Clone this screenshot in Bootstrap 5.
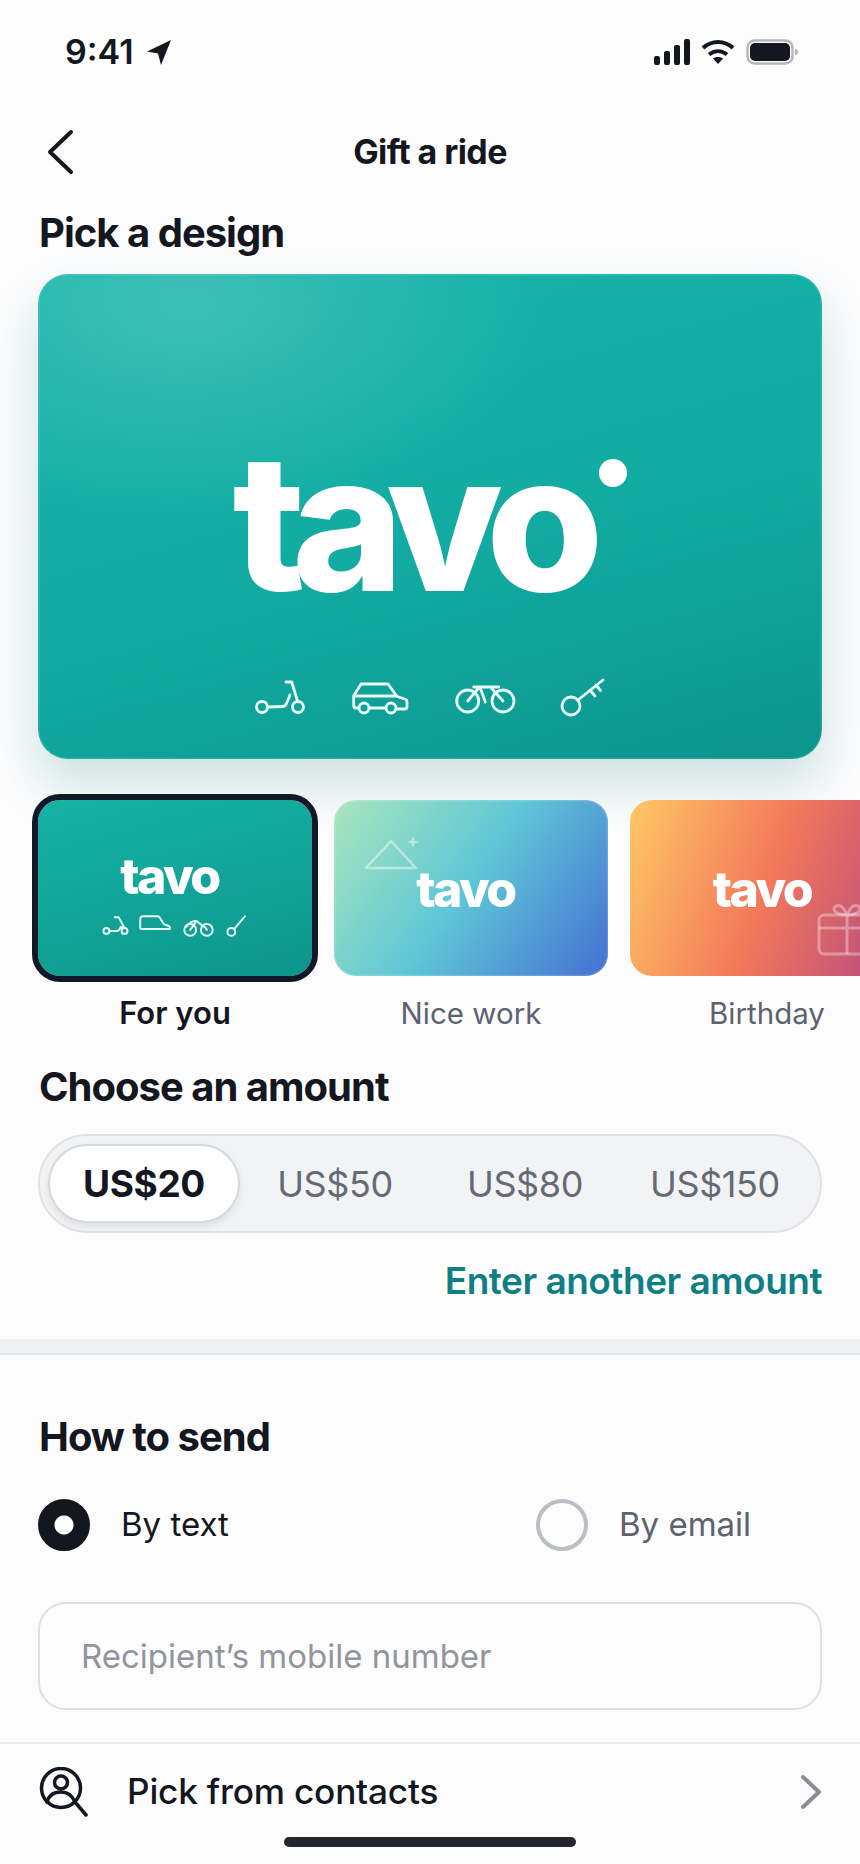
<!DOCTYPE html>
<html lang="en">
<head>
  <meta charset="UTF-8">
  <title>Gift a ride</title>
  <link href="https://cdn.jsdelivr.net/npm/bootstrap@5.3.0/dist/css/bootstrap.min.css" rel="stylesheet">
  <style>
    html, body { height: 1864px; overflow: hidden; }
    body {
      background: #fcfcfd;
      color: #14171f;
      font-family: Inter, "Liberation Sans", sans-serif;
    }
    .status-row { height: 104px; padding: 30px 62px 0 65px; }
    .status-group { height: 44px; }
    .status-time { font-size: 34px; font-weight: 600; line-height: 44px; }
    .top-nav { height: 96px; padding: 0 38px; position: relative; }
    .top-title { font-size: 34px; font-weight: 700; letter-spacing: -.6px; line-height: 1; }
    .back-link { position: absolute; left: 47px; top: 25px; line-height: 0; }
    .sect-title { font-size: 40px; font-weight: 700; letter-spacing: -1px; line-height: 46px; margin: 0; }
    .pad-x { padding-left: 39px; padding-right: 38px; }
    .pick-title { margin-top: 10px; }
    .hero-card {
      width: 784px; height: 485px; margin: 18px 0 0 38px;
      border-radius: 30px;
      background:
        radial-gradient(ellipse 360px 220px at 150px 30px, rgba(255,255,255,.17), rgba(255,255,255,0)),
        linear-gradient(165deg, #17b4a9 0%, #12aba1 55%, #0b958d 100%);
      box-shadow: 0 26px 50px rgba(15,120,110,.2), inset 0 0 0 1.500px rgba(255,255,255,.1);
    }
    .logo-word { color: #fff; font-weight: 800; position: relative; display: inline-block; line-height: 1; }
    .logo-big { font-size: 190px; letter-spacing: -14px; margin: 153px 38px 0 0; height: 190px; }
    .logo-dot {
      position: absolute; width: 28px; height: 28px; border-radius: 50%;
      background: #fff; left: 367px; top: 32px;
    }
    .hero-icons { margin-top: 61px; }
    .thumb-scroll { overflow: hidden; margin-top: 33px; padding: 8px 0 0 38px; }
    .thumb-strip { gap: 22px; width: max-content; }
    .thumb-item { width: 274px; flex: none; text-align: center; }
    .thumb-card { height: 176px; border-radius: 22px; position: relative; overflow: hidden; }
    .thumb-on { background: linear-gradient(165deg, #16b3a6, #0d968b); outline: 6px solid #111827; }
    .thumb-nice { background: linear-gradient(125deg, #a9e6bd 0%, #5fc7d6 48%, #4470d3 100%); box-shadow: inset 0 0 0 1.500px rgba(255,255,255,.15); }
    .thumb-bday { background: linear-gradient(110deg, #ffc865 0%, #f2785a 50%, #bd4f7d 92%); }
    .logo-small { font-size: 50px; letter-spacing: -2.600px; }
    .thumb-label { font-size: 29.500px; line-height: 36px; margin-top: 19px; color: #5c6270; }
    .thumb-label.is-on { color: #14171f; font-weight: 600; font-size: 31px; }
    .deco { position: absolute; }
    .amount-title { margin-top: 33px; }
    .seg-wrap {
      width: 784px; height: 99px; margin: 24px 0 0 38px; padding: 9px 10px 9px 8px;
      border-radius: 50px; background: #f2f3f5; border: 2px solid #e1e2e5;
    }
    .seg-btn {
      width: 190px; height: 79px; border: 0; border-radius: 40px; padding: 0;
      font-size: 36px; color: #666a76; letter-spacing: -.4px; flex: none;
    }
    .seg-btn.is-on {
      width: 192px; font-size: 37px;
      background: #fff; color: #14171f; font-weight: 700; border: 2px solid #d8d9dc;
      box-shadow: 0 4px 8px rgba(0,0,0,.08);
    }
    .seg-btn.is-on:hover, .seg-btn.is-on:active { background: #fff; color: #14171f; }
    .other-amt {
      display: block; text-align: right; font-size: 37px; font-weight: 600; letter-spacing: -.5px;
      color: #0e7f83; text-decoration: none; line-height: 44px; margin: 26px 38px 0 0;
    }
    .band { height: 16px; background: #f0f1f2; border-bottom: 2px solid #e6e7e9; margin-top: 36px; }
    .send-title { margin-top: 59px; }
    .radio-row { margin: 39px 0 0 38px; height: 52px; }
    .radio-opt { gap: 31px; margin: 0; padding: 0; font-size: 33px; flex: none; }
    .radio-opt:first-child { width: 498px; }
    .radio-opt + .radio-opt { color: #5c6270; width: 300px; }
    .radio-opt .form-check-input {
      width: 52px; height: 52px; margin: 0; float: none; flex: none; background-color: transparent;
      border: 4px solid #bcbec5;
    }
    .radio-opt .form-check-input:checked {
      background-color: #14171f; border-color: #14171f;
      background-image: radial-gradient(circle, #fff 0 9px, transparent 10px);
    }
    .phone-input.form-control {
      width: 784px; height: 108px; margin: 51px 0 0 38px; padding: 0 41px;
      border: 2px solid #dfe0e3; border-radius: 28px; background: #fcfcfd; font-size: 33px;
    }
    .phone-input::placeholder { color: #92959e; opacity: 1; }
    .contact-row {
      margin-top: 32px; height: 95px; padding: 2px 38px 0 39px;
      border-top: 2px solid #e9eaec; color: #14171f; text-decoration: none; font-size: 35.200px; font-weight: 500;
      letter-spacing: -.2px;
    }
    .home-bar { width: 292px; height: 10px; margin: 0 auto; border-radius: 5px; background: #25262e; }
  </style>
</head>
<body>

  <div class="status-row d-flex justify-content-between align-items-start">
    <div class="status-group d-flex align-items-center" style="gap:12px">
      <span class="status-time">9:41</span>
      <svg width="26" height="27" viewBox="0 0 26 27"><path d="M25 1 1 12.500 12 14.500 15 26Z" fill="#14171f"/></svg>
    </div>
    <div class="status-group d-flex align-items-center" style="gap:11px">
      <svg width="36" height="26" viewBox="0 0 36 26" fill="#14171f"><rect x="0" y="17" width="6" height="9" rx="2"/><rect x="10" y="12" width="6" height="14" rx="2"/><rect x="20" y="6" width="6" height="20" rx="2"/><rect x="30" y="0" width="6" height="26" rx="2"/></svg>
      <svg width="34" height="26" viewBox="0 0 34 26" fill="none" stroke="#14171f" stroke-width="4"><path d="M2 9C11 1 23 1 32 9"/><path d="M8 15.500c5.500-4.500 12.500-4.500 18 0"/><path d="M17 25l-5-5.500c3-2 7-2 10 0z" fill="#14171f" stroke="none"/></svg>
      <svg width="52" height="26" viewBox="0 0 52 26"><rect x="1.500" y="1.500" width="45" height="23" rx="7" fill="none" stroke="#b5b6ba" stroke-width="2.500"/><rect x="4" y="4" width="40" height="18" rx="5" fill="#14171f"/><path d="M49 9.500c2 .5 3 2 3 3.500s-1 3-3 3.500z" fill="#b5b6ba"/></svg>
    </div>
  </div>

  <div class="top-nav d-flex align-items-center justify-content-center">
    <a href="#" class="back-link" aria-label="Back">
      <svg width="28" height="46" viewBox="0 0 28 46" fill="none" stroke="#14171f" stroke-width="4" stroke-linecap="round" stroke-linejoin="round"><path d="M24 3 3 23l21 20"/></svg>
    </a>
    <span class="top-title">Gift a ride</span>
  </div>

  <div class="pad-x pick-title"><h2 class="sect-title">Pick a design</h2></div>

  <div class="hero-card text-center">
    <div class="logo-word logo-big">tavo<span class="logo-dot"></span></div>
    <div class="hero-icons d-flex justify-content-center align-items-center">
      <svg width="50" height="36" viewBox="0 0 50 36" fill="none" stroke="#e8fbf8" stroke-width="2.800" stroke-linecap="round" stroke-linejoin="round" style="margin-right:47px"><circle cx="7" cy="27" r="5.500"/><circle cx="43" cy="27" r="5.500"/><path d="M12.500 27 27.500 26.500c2 0 3-1 4-3L35 15M31 2h5.700l6 19.700"/></svg>
      <svg width="58" height="34" viewBox="0 0 58 34" fill="none" stroke="#e8fbf8" stroke-width="2.800" stroke-linecap="round" stroke-linejoin="round" style="margin-right:44px"><path d="M7 27H4c-1.500 0-2.300-1-2.300-2.500V15L9 3h27l9 12.500 8 2.500c1.500.5 2 1.500 2 3v4.500c0 1.500-1 2.500-2.500 2.500H44M34 27H17M1.700 15h43"/><circle cx="12" cy="27" r="5"/><circle cx="39" cy="27" r="5"/></svg>
      <svg width="62" height="34" viewBox="0 0 62 34" fill="none" stroke="#e8fbf8" stroke-width="2.800" stroke-linecap="round" stroke-linejoin="round" style="margin-right:43px"><circle cx="13.700" cy="20" r="11"/><circle cx="49" cy="20" r="11"/><path d="M19.700 6h25M13.700 20 24.700 7M26.300 7l5 14M37.300 7 49 20"/></svg>
      <svg width="46" height="40" viewBox="0 0 46 40" fill="none" stroke="#e8fbf8" stroke-width="2.800" stroke-linecap="round" stroke-linejoin="round"><circle cx="12" cy="28" r="9"/><path d="M19 22 44 2M31 12l5 6M37 7l4.500 5.500"/></svg>
    </div>
  </div>

  <div class="thumb-scroll">
    <div class="thumb-strip d-flex">
      <div class="thumb-item">
        <div class="thumb-card thumb-on text-center">
          <div class="logo-word logo-small" style="margin:51px 11px 0 0">tavo</div>
          <svg class="deco" style="left:64px;top:113px" width="145" height="26" viewBox="0 0 148 26" fill="none" stroke="#e8fbf8" stroke-width="2" stroke-linecap="round" stroke-linejoin="round">
            <circle cx="4.500" cy="18" r="3"/><circle cx="23" cy="18" r="3"/><path d="M7.500 18h8c2 0 2.500-1 3.500-4l2 1M13 4h4l6 11"/>
            <path d="M39 15V6c0-2 1-3 3-3h14c2 0 3 1 4 3l3 5 5 2c1 .5 2 2 1 3H41c-1 0-2-.5-2-1Z"/>
            <circle cx="90" cy="17" r="6"/><circle cx="107" cy="17" r="6"/><path d="M86 14c4-6 10-8 13-4 3 3 6 2 8 7M90 17l5-7"/>
            <circle cx="132" cy="19" r="4"/><path d="M135 16 146 3"/>
          </svg>
        </div>
        <div class="thumb-label is-on">For you</div>
      </div>
      <div class="thumb-item">
        <div class="thumb-card thumb-nice text-center">
          <svg class="deco" style="left:30px;top:36px" width="60" height="40" viewBox="0 0 60 40" fill="none" stroke="#fff" stroke-opacity=".45" stroke-width="2.500" stroke-linejoin="round"><path d="M27 5 2 32h50Z"/><path d="M49 0l1.500 4.500L55 6l-4.500 1.500L49 12l-1.500-4.500L43 6l4.500-1.500Z" fill="#fff" fill-opacity=".45" stroke="none"/></svg>
          <div class="logo-word logo-small" style="margin:64px 11px 0 0">tavo</div>
        </div>
        <div class="thumb-label">Nice work</div>
      </div>
      <div class="thumb-item">
        <div class="thumb-card thumb-bday text-center">
          <div class="logo-word logo-small" style="margin:64px 10px 0 0">tavo</div>
          <svg class="deco" style="left:187px;top:104px" width="62" height="52" viewBox="0 0 62 52" fill="none" stroke="#fff" stroke-opacity=".35" stroke-width="3" stroke-linejoin="round"><rect x="2" y="11" width="58" height="39" rx="5"/><path d="M2 24h58M30 11v39M30 11c-8 0-13-3-13-6s5-5 8-2 5 8 5 8Zm0 0c8 0 13-3 13-6s-5-5-8-2-5 8-5 8Z"/></svg>
        </div>
        <div class="thumb-label">Birthday</div>
      </div>
    </div>
  </div>

  <div class="pad-x amount-title"><h2 class="sect-title">Choose an amount</h2></div>

  <div class="seg-wrap d-flex align-items-center">
    <button type="button" class="btn seg-btn is-on">US$20</button>
    <button type="button" class="btn seg-btn">US$50</button>
    <button type="button" class="btn seg-btn">US$80</button>
    <button type="button" class="btn seg-btn">US$150</button>
  </div>
  <a href="#" class="other-amt">Enter another amount</a>

  <div class="band"></div>

  <div class="pad-x send-title"><h2 class="sect-title">How to send</h2></div>

  <div class="radio-row d-flex">
    <label class="radio-opt d-flex align-items-center">
      <input class="form-check-input" type="radio" name="sendBy" checked>
      <span>By text</span>
    </label>
    <label class="radio-opt d-flex align-items-center">
      <input class="form-check-input" type="radio" name="sendBy">
      <span>By email</span>
    </label>
  </div>

  <input type="text" class="form-control phone-input" placeholder="Recipient’s mobile number">

  <a href="#" class="contact-row d-flex align-items-center">
    <svg width="50" height="50" viewBox="0 0 50 50" fill="none" stroke="#14171f" stroke-width="3.500" stroke-linecap="round" style="margin-right:38px;flex:none"><circle cx="22" cy="21" r="19.500"/><circle cx="22" cy="15.500" r="6.500"/><path d="M8 35c2-7 7-10 14-10s11 3 14 10M36 35l11 13"/></svg>
    <span class="flex-grow-1">Pick from contacts</span>
    <svg width="22" height="36" viewBox="0 0 22 36" fill="none" stroke="#8b8d96" stroke-width="4" stroke-linecap="round" stroke-linejoin="round"><path d="M3 3l16 15L3 33"/></svg>
  </a>

  <div class="home-bar"></div>

  <script src="https://cdn.jsdelivr.net/npm/bootstrap@5.3.0/dist/js/bootstrap.bundle.min.js"></script>
</body>
</html>
